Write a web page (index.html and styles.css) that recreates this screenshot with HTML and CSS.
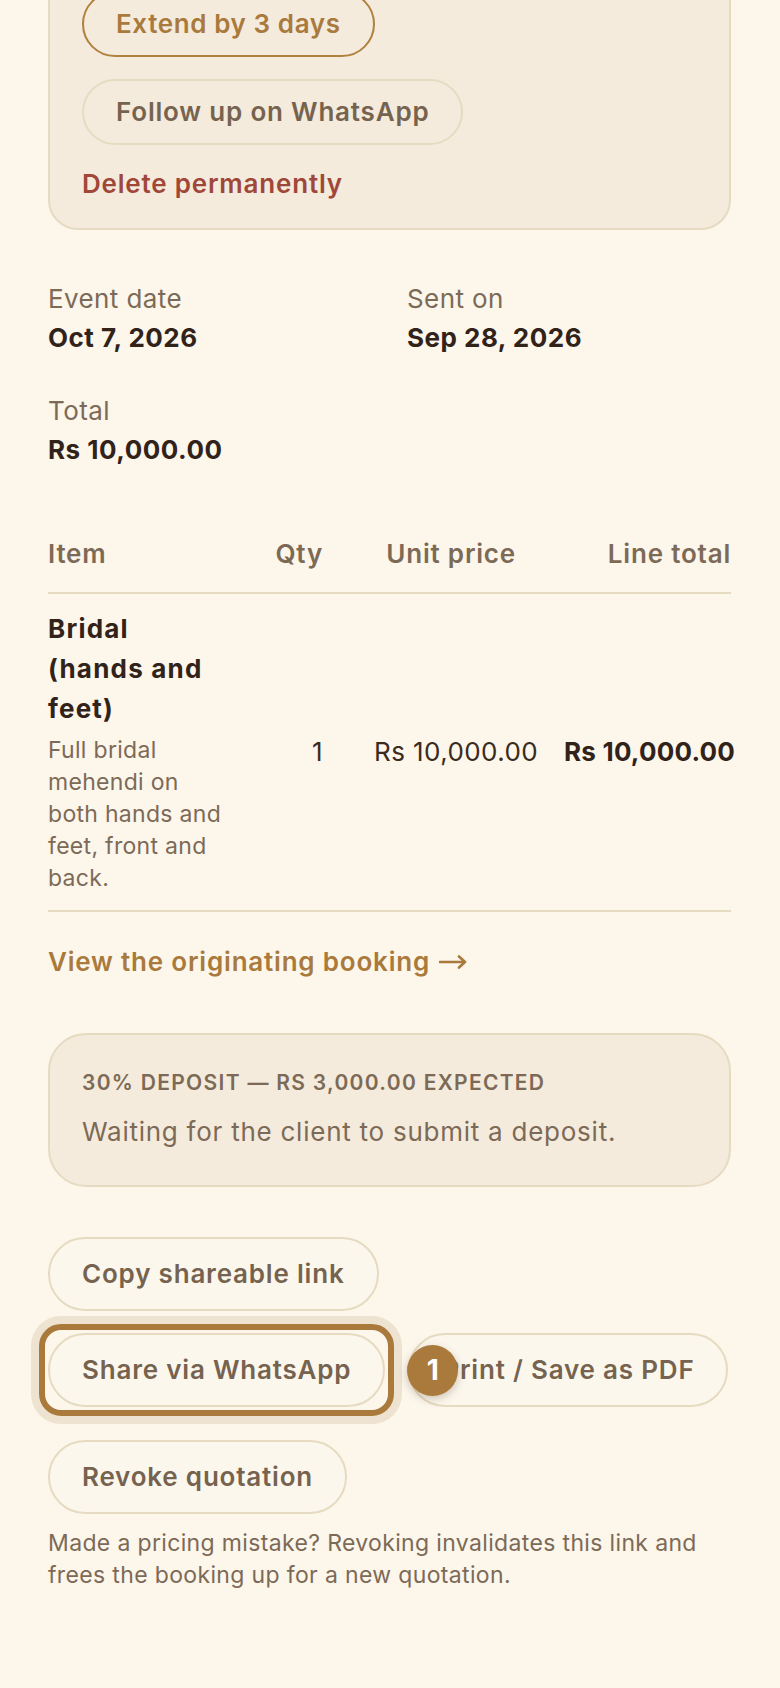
FILE: index.html
```html
<!DOCTYPE html>
<html lang="en">
<head>
<meta charset="utf-8">
<title>Quotation</title>
<link rel="stylesheet" href="styles.css">
</head>
<body>
<main class="page">
  <section class="card actions-card">
    <button class="btn btn-accent">Extend by 3 days</button>
    <button class="btn">Follow up on WhatsApp</button>
    <button class="link-danger">Delete permanently</button>
  </section>

  <dl class="facts">
    <div class="fact"><dt>Event date</dt><dd>Oct 7, 2026</dd></div>
    <div class="fact"><dt>Sent on</dt><dd>Sep 28, 2026</dd></div>
    <div class="fact"><dt>Total</dt><dd>Rs 10,000.00</dd></div>
  </dl>

  <div class="items" role="table">
    <div class="items-head" role="row">
      <span class="th th-item" role="columnheader">Item</span>
      <span class="th th-num" role="columnheader">Qty</span>
      <span class="th th-num th-unit" role="columnheader">Unit price</span>
      <span class="th th-num" role="columnheader">Line total</span>
    </div>
    <div class="items-row" role="row">
      <div class="td td-item" role="cell">
        <div class="item-name">Bridal (hands and feet)</div>
        <div class="item-desc">Full bridal mehendi on both hands and feet, front and back.</div>
      </div>
      <span class="td td-num" role="cell">1</span>
      <span class="td td-num" role="cell">Rs 10,000.00</span>
      <span class="td td-num td-total" role="cell">Rs 10,000.00</span>
    </div>
  </div>

  <a class="link" href="#">View the originating booking <svg class="arrow" width="28" height="14" viewBox="0 0 28 14" aria-hidden="true"><path d="M1 7h25M20 1.5L26 7l-6 5.5" fill="none" stroke="currentColor" stroke-width="2.6" stroke-linecap="round" stroke-linejoin="round"/></svg></a>

  <section class="card deposit">
    <p class="deposit-title">30% deposit — Rs 3,000.00 expected</p>
    <p class="deposit-text">Waiting for the client to submit a deposit.</p>
  </section>

  <div class="share-actions">
    <button class="btn btn-lg">Copy shareable link</button>
    <div class="share-row">
      <span class="highlight">
        <button class="btn btn-lg">Share via WhatsApp</button>
        <span class="ring"></span>
        <span class="badge">1</span>
      </span>
      <button class="btn btn-lg">Print / Save as PDF</button>
    </div>
  </div>

  <button class="btn btn-lg revoke">Revoke quotation</button>
  <p class="note">Made a pricing mistake? Revoking invalidates this link and frees the booking up for a new quotation.</p>
</main>
</body>
</html>
```

FILE: styles.css
```css
html, body {
  margin: 0;
  padding: 0;
  background: #FCF6EB;
}

body {
  font-family: "Inter", "Noto Sans", sans-serif;
  color: #2E2016;
}

.page {
  padding: 0 49px 0 48px;
}

.card {
  background: #F4EBDC;
  border: 2px solid #E6DBC1;
}

.actions-card {
  margin-top: -43px;
  border-radius: 30px;
  padding: 32px 32px 28px;
  display: flex;
  flex-direction: column;
  align-items: flex-start;
  gap: 22px;
}

.btn {
  font-family: inherit;
  font-size: 26px;
  font-weight: 600;
  line-height: 30px;
  letter-spacing: 0.8px;
  color: #76634F;
  background: transparent;
  border: 2px solid #E6DBC1;
  border-radius: 999px;
  padding: 16px 32px;
  white-space: nowrap;
  cursor: pointer;
}

.btn-accent {
  color: #A97A3C;
  border-color: #B0813F;
  letter-spacing: 0.6px;
}

.btn-lg {
  padding: 20px 32px;
  background: #FCF7ED;
}

.link-danger {
  font-family: inherit;
  font-size: 26px;
  font-weight: 600;
  line-height: 32px;
  letter-spacing: 0.8px;
  color: #A0473A;
  background: none;
  border: 0;
  padding: 0;
  margin-top: 1px;
}

/* facts */
.facts {
  margin: 53px 0 0;
  display: grid;
  grid-template-columns: 1fr 1fr;
  column-gap: 35px;
  row-gap: 41px;
}

.fact dt {
  font-size: 26px;
  line-height: 32px;
  color: #7C6A57;
  letter-spacing: 0.4px;
}

.fact dd {
  margin: 7px 0 0;
  font-size: 26px;
  line-height: 32px;
  font-weight: 700;
  letter-spacing: 0.5px;
  color: #31231A;
}

/* items table */
.items {
  margin-top: 72px;
}

.items-head,
.items-row {
  display: grid;
  grid-template-columns: 178px 97px 215px 1fr;
  border-bottom: 2px solid #E6DBC1;
}

.items-head {
  padding-bottom: 22px;
}

.th {
  font-size: 26px;
  line-height: 32px;
  font-weight: 600;
  letter-spacing: 0.8px;
  color: #7C6A57;
}

.th-num {
  text-align: right;
}

.th-unit {
  padding-right: 22px;
}

.items-row {
  padding: 15px 0 16px;
}

.item-name {
  font-size: 26px;
  line-height: 40px;
  font-weight: 700;
  letter-spacing: 1.2px;
  color: #31231A;
}

.item-desc {
  margin-top: 5px;
  font-size: 23px;
  line-height: 32px;
  letter-spacing: 0.3px;
  color: #7C6A57;
}

.td-num {
  align-self: center;
  text-align: right;
  white-space: nowrap;
  font-size: 26px;
  line-height: 32px;
  letter-spacing: 0.4px;
  color: #3A2B1F;
}

.td-total {
  font-weight: 700;
  letter-spacing: 0.2px;
  margin-right: -4px;
  color: #31231A;
}

/* link */
.link {
  display: block;
  margin-top: 34px;
  font-size: 26px;
  line-height: 32px;
  font-weight: 600;
  letter-spacing: 0.8px;
  color: #A97A3C;
  text-decoration: none;
}

.arrow {
  display: inline-block;
  vertical-align: middle;
  margin-left: 2px;
  margin-top: -3px;
}

/* deposit */
.deposit {
  margin-top: 55px;
  border-radius: 38px;
  padding: 34px 32px 37px;
}

.deposit p {
  margin: 0;
}

.deposit-title {
  font-size: 21px;
  line-height: 28px;
  font-weight: 600;
  text-transform: uppercase;
  letter-spacing: 1.3px;
  color: #7C6A57;
}

.deposit .deposit-text {
  margin-top: 19px;
  font-size: 26px;
  line-height: 32px;
  letter-spacing: 0.75px;
  color: #7C6A57;
}

/* share actions */
.share-actions {
  margin-top: 50px;
  display: flex;
  flex-direction: column;
  align-items: flex-start;
  gap: 22px;
}

.share-row {
  display: flex;
  align-items: center;
  gap: 23px;
}

.highlight {
  position: relative;
  display: inline-flex;
}

.ring {
  position: absolute;
  inset: -9px;
  border: 6px solid #A97A3C;
  border-radius: 22px;
  box-shadow: 0 0 0 8px #EDE3D0;
  pointer-events: none;
}

.badge {
  position: absolute;
  z-index: 2;
  left: calc(100% + 22px);
  top: 50%;
  margin-top: -25px;
  width: 51px;
  height: 51px;
  border-radius: 50%;
  background: #A97A3C;
  color: #FFFFFF;
  font-size: 28px;
  font-weight: 700;
  line-height: 51px;
  text-align: center;
  box-shadow: 0 3px 8px rgba(70, 45, 20, 0.25);
}

.revoke {
  display: block;
  margin-top: 33px;
}

.note {
  margin: 13px 0 0;
  font-size: 23px;
  line-height: 32px;
  letter-spacing: 0.35px;
  color: #7C6A57;
}
```
